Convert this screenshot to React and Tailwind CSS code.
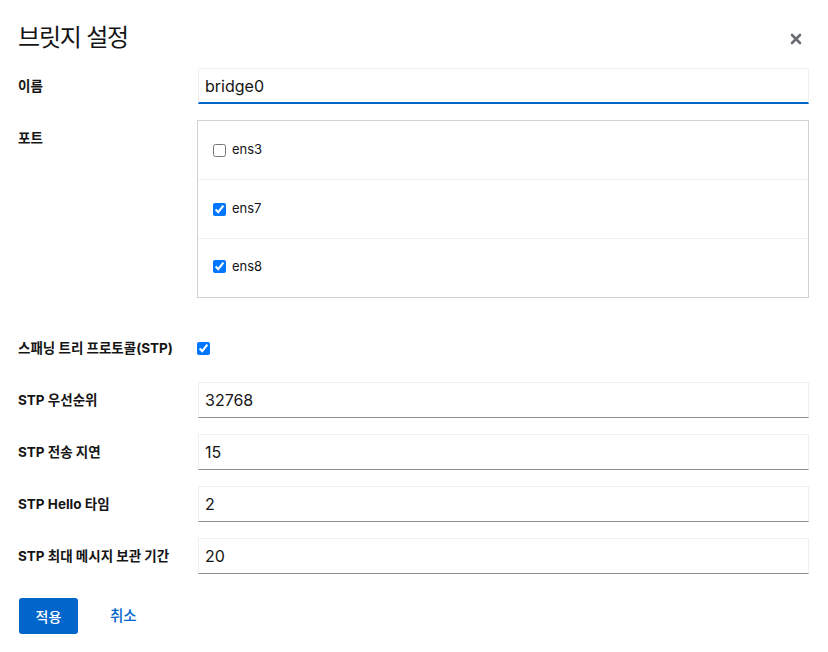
import React from "react";

const font = { fontFamily: 'Inter, "Noto Sans CJK KR", sans-serif' };

function TextRow({ label, value, focused }) {
  return (
    <div className="grid grid-cols-[180px_1fr] items-center">
      <label className="text-[13.5px] font-bold text-[#151515]">{label}</label>
      <input
        defaultValue={value}
        className={
          "h-[36px] w-full px-[6px] text-[16px] text-[#151515] outline-none border border-[#f0f0f0] border-b-[#8a8d90] " +
          (focused ? "border-b-2 border-b-[#0066cc]" : "")
        }
      />
    </div>
  );
}

function Port({ name, checked, last }) {
  return (
    <div
      className={
        "flex items-center gap-[6px] px-[15px] " +
        (last ? "h-[58px] pb-[3px]" : "h-[59px] border-b border-[#f0f0f0]")
      }
    >
      <input type="checkbox" defaultChecked={checked} className="m-0 h-[13px] w-[13px]" />
      <span className="text-[13px] text-[#151515]">{name}</span>
    </div>
  );
}

export default function App() {
  return (
    <div className="h-[652px] w-[828px] bg-white pl-[18px] pr-[19px] pt-[22px]" style={font}>
      <div className="flex items-center justify-between">
        <h1 className="text-[24px] leading-[32px] tracking-[-1.2px] text-[#151515]">브릿지 설정</h1>
        <svg width="12" height="12" viewBox="0 0 12 12" className="mr-[7px] mt-[2px]">
          <path d="M2 2 L10 10 M10 2 L2 10" stroke="#6a6e73" strokeWidth="2.6" strokeLinecap="round" />
        </svg>
      </div>

      <div className="mt-[14px] flex flex-col">
        <TextRow label="이름" value="bridge0" focused />

        <div className="mt-[16px] grid grid-cols-[179px_1fr] items-start">
          <label className="pt-[8px] text-[13.5px] font-bold text-[#151515]">포트</label>
          <div className="border border-[#d2d2d2]">
            <Port name="ens3" />
            <Port name="ens7" checked />
            <Port name="ens8" checked last />
          </div>
        </div>

        <div className="mt-[32px] grid h-[36px] grid-cols-[179px_1fr] items-center">
          <label className="text-[13.5px] font-bold text-[#151515]">스패닝 트리 프로토콜(STP)</label>
          <input type="checkbox" defaultChecked className="m-0 h-[13px] w-[13px]" />
        </div>

        <div className="mt-[16px] flex flex-col gap-[16px]">
          <TextRow label="STP 우선순위" value="32768" />
          <TextRow label="STP 전송 지연" value="15" />
          <TextRow label="STP Hello 타임" value="2" />
          <TextRow label="STP 최대 메시지 보관 기간" value="20" />
        </div>

        <div className="mt-[24px] flex items-center gap-[16px]">
          <button className="ml-[1px] h-[36px] w-[59px] rounded-[3px] bg-[#0066cc] text-[14px] font-medium text-white">
            적용
          </button>
          <button className="px-[16px] text-[14.5px] font-medium text-[#0066cc]">취소</button>
        </div>
      </div>
    </div>
  );
}
